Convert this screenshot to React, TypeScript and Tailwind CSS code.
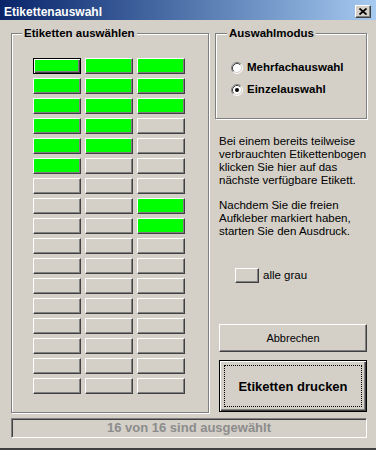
import React from "react";

// 17 rows x 3 columns, 1 = already selected (green)
const sheet: number[][] = [
  [1, 1, 1],
  [1, 1, 1],
  [1, 1, 1],
  [1, 1, 0],
  [1, 1, 0],
  [1, 0, 0],
  [0, 0, 0],
  [0, 0, 1],
  [0, 0, 1],
  [0, 0, 0],
  [0, 0, 0],
  [0, 0, 0],
  [0, 0, 0],
  [0, 0, 0],
  [0, 0, 0],
  [0, 0, 0],
  [0, 0, 0],
];

const raised =
  "border border-t-white border-l-white border-r-[#404040] border-b-[#404040] shadow-[inset_-1px_-1px_0_#808080]";
const raisedDefault =
  "border border-black shadow-[inset_1px_1px_0_#fff,inset_-1px_-1px_0_#404040,inset_-2px_-2px_0_#808080]";
const etched =
  "border border-[#808080] shadow-[inset_1px_1px_0_#fff,1px_1px_0_#fff]";

const Radio = ({ checked }: { checked?: boolean }) => (
  <svg width="12" height="12" viewBox="0 0 12 12" className="shrink-0">
    <circle cx="6" cy="6" r="5" fill="#ffffff" />
    <path d="M2.11 9.89 A5.5 5.5 0 0 1 9.89 2.11" fill="none" stroke="#808080" />
    <path d="M9.89 2.11 A5.5 5.5 0 0 1 2.11 9.89" fill="none" stroke="#ffffff" />
    <path d="M2.82 9.18 A4.5 4.5 0 0 1 9.18 2.82" fill="none" stroke="#404040" />
    <path d="M9.18 2.82 A4.5 4.5 0 0 1 2.82 9.18" fill="none" stroke="#d4d0c8" />
    {checked && <circle cx="6" cy="6" r="2" fill="#000000" />}
  </svg>
);

export default function App() {
  return (
    <div className="w-[376px] h-[450px] bg-[#d4d0c8] flex flex-col font-['Liberation_Sans',Arial,sans-serif] text-[11px] text-black border-b-2 border-b-[#404040] overflow-hidden">
      {/* Title bar */}
      <div className="h-[20px] shrink-0 flex items-center justify-between pl-[4px] pr-[5px] pt-[3px] bg-gradient-to-r from-[#0a246a] to-[#a6caf0]">
        <span className="text-white font-bold text-[12px] leading-none">
          Etikettenauswahl
        </span>
        <div
          className={`w-[16px] h-[13px] bg-[#d4d0c8] flex items-center justify-center ${raised}`}
        >
          <svg width="8" height="7" viewBox="0 0 8 7">
            <path d="M0.5 0.5 L7.5 6.5 M7.5 0.5 L0.5 6.5" stroke="#000" strokeWidth="1.7" />
          </svg>
        </div>
      </div>

      <div className="flex-1 flex flex-col pl-[11px] pr-[9px] pt-[6px]">
        <div className="flex gap-[6px]">
          {/* Left group */}
          <fieldset className={`w-[198px] h-[387px] ${etched}`}>
            <legend className="ml-[10px] px-[2px] bg-[#d4d0c8] font-bold text-[11.5px] leading-[14px]">
              Etiketten auswählen
            </legend>
            <div className="pl-[21px] pt-[18px] grid grid-cols-[48px_48px_48px] gap-x-[4px] gap-y-[4px]">
              {sheet.map((row, r) =>
                row.map((on, c) => (
                  <div
                    key={`${r}-${c}`}
                    className={`h-[16px] ${on ? "bg-[#00ff00]" : "bg-[#d4d0c8]"} ${
                      r === 0 && c === 0 ? raisedDefault : raised
                    }`}
                  />
                ))
              )}
            </div>
          </fieldset>

          {/* Right column */}
          <div className="w-[152px] flex flex-col">
            <fieldset className={`h-[93px] ${etched}`}>
              <legend className="ml-[11px] px-[2px] bg-[#d4d0c8] font-bold text-[11.5px] leading-[14px]">
                Auswahlmodus
              </legend>
              <div className="pl-[15px] pt-[21px] flex flex-col gap-[8px]">
                <label className="h-[14px] flex items-center gap-[4px] font-bold text-[11.5px]">
                  <Radio />
                  <span>Mehrfachauswahl</span>
                </label>
                <label className="h-[14px] flex items-center gap-[4px] font-bold text-[11.5px]">
                  <Radio checked />
                  <span>Einzelauswahl</span>
                </label>
              </div>
            </fieldset>

            <div className="pl-[4px] flex flex-col">
              <p className="mt-[16px] leading-[13px] whitespace-nowrap text-[11.5px]">
                Bei einem bereits teilweise
                <br />
                verbrauchten Etikettenbogen
                <br />
                klicken Sie hier auf das
                <br />
                nächste verfügbare Etikett.
              </p>
              <p className="mt-[12px] leading-[13px] whitespace-nowrap text-[11.5px]">
                Nachdem Sie die freien
                <br />
                Aufkleber markiert haben,
                <br />
                starten Sie den Ausdruck.
              </p>

              <div className="mt-[29px] flex items-center gap-[4px] pl-[16px]">
                <div className={`w-[24px] h-[15px] bg-[#d4d0c8] ${raised}`} />
                <span className="text-[11.5px]">alle grau</span>
              </div>

              <button
                className={`mt-[40px] h-[28px] w-[148px] bg-[#d4d0c8] text-[11px] ${raised}`}
              >
                Abbrechen
              </button>

              <button
                className={`mt-[8px] h-[52px] w-[148px] bg-[#d4d0c8] p-[4px] flex ${raisedDefault}`}
              >
                <span className="flex-1 flex items-center justify-center border border-dotted border-black font-bold text-[13px]">
                  Etiketten drucken
                </span>
              </button>
            </div>
          </div>
        </div>

        {/* Status */}
        <div className="mt-[5px] w-[356px] h-[20px] flex items-center justify-center border border-t-[#808080] border-l-[#808080] border-b-white border-r-white shadow-[inset_1px_1px_0_#404040] text-[#8c8c8c] font-bold text-[13px]">
          16 von 16 sind ausgewählt
        </div>
      </div>
    </div>
  );
}
